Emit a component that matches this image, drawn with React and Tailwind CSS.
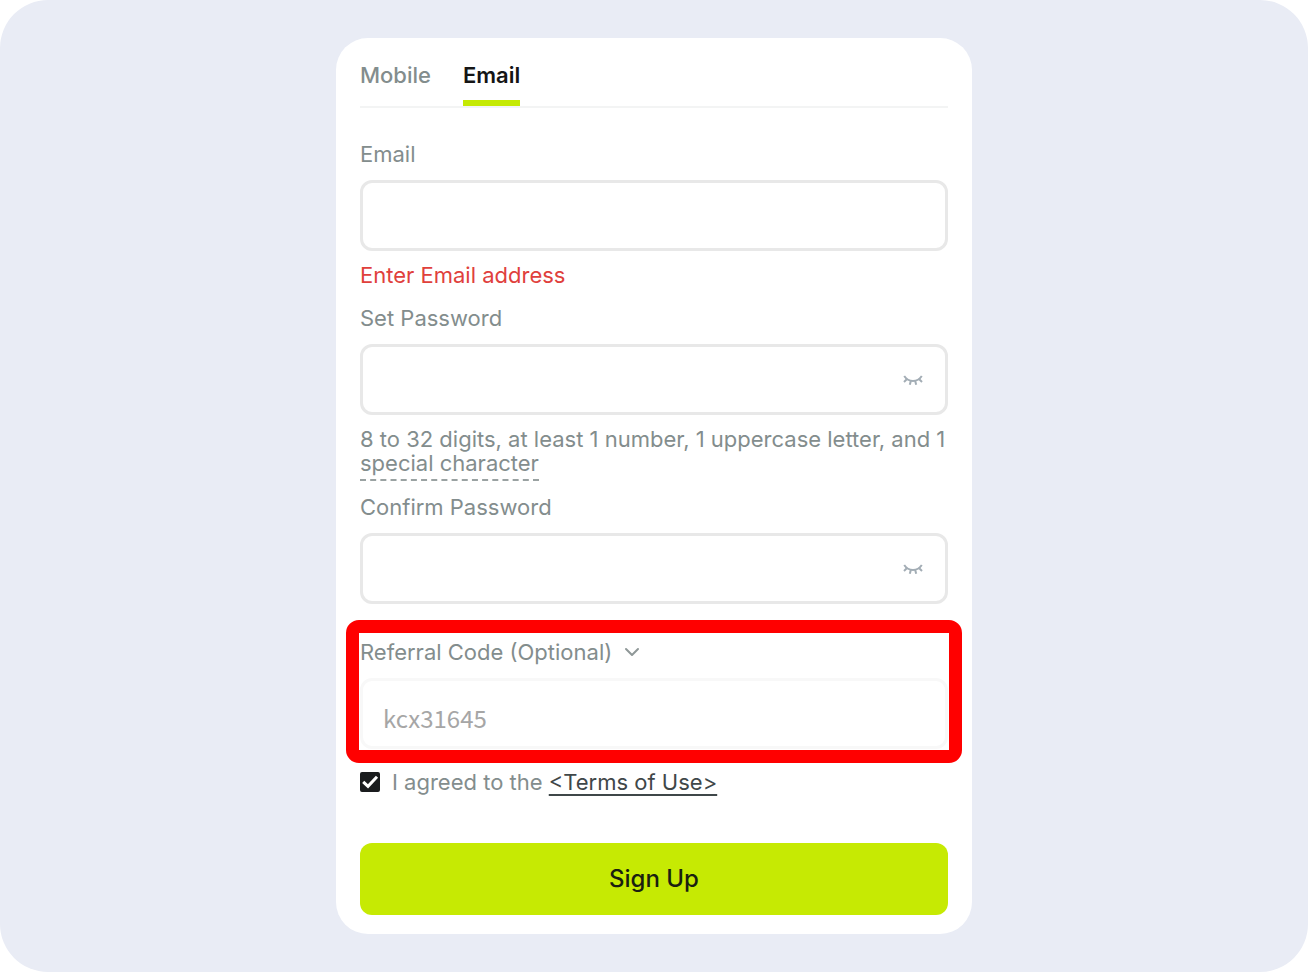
import { useState } from "react";
import { ChevronDown } from "lucide-react";

const labelClass = "block text-[22px] leading-6 text-[#838d8d]";
const inputClass =
  "block w-full h-[71px] rounded-xl border-3 border-[#e8e8e8] bg-white px-5 text-2xl text-[#1a1a1a] outline-none";

function ClosedEye() {
  return (
    <svg
      className="w-5 h-5"
      viewBox="0 0 20 20"
      fill="none"
      stroke="currentColor"
      strokeWidth="2"
    >
      <path d="M1.2 6C3.6 9.6 6.6 11 10 11C13.4 11 16.4 9.6 18.8 6" />
      <path d="M4 9L1 12" />
      <path d="M16 9L19 12" />
      <path d="M7.9 10.8L6.8 14.8" />
      <path d="M12.1 10.8L13.2 14.8" />
    </svg>
  );
}

function PasswordField({ id, label }) {
  const [visible, setVisible] = useState(false);

  return (
    <div>
      <label htmlFor={id} className={labelClass}>
        {label}
      </label>
      <div className="relative mt-[14px]">
        <input
          id={id}
          type={visible ? "text" : "password"}
          className={inputClass}
        />
        <button
          type="button"
          aria-label="Toggle password visibility"
          onClick={() => setVisible(!visible)}
          className="absolute inset-y-0 right-[25px] flex items-center text-[#a3adb5]"
        >
          <ClosedEye />
        </button>
      </div>
    </div>
  );
}

export default function App() {
  const [tab, setTab] = useState("Email");
  const [agreed, setAgreed] = useState(true);
  const [showReferral, setShowReferral] = useState(true);

  return (
    <div className="min-h-screen bg-white flex font-['Inter',sans-serif]">
      <main className="flex-1 flex items-start justify-center rounded-[48px] bg-[#e9ecf5] py-[38px]">
        <form
          onSubmit={(e) => e.preventDefault()}
          className="w-full max-w-[636px] rounded-[32px] bg-white px-6 pt-5 pb-[19px]"
        >
          <div className="flex gap-8 border-b-2 border-[#f3f4f4]">
            {["Mobile", "Email"].map((name) => (
              <button
                key={name}
                type="button"
                onClick={() => setTab(name)}
                className={
                  tab === name
                    ? "h-12 pb-2 border-b-6 border-[#c5ea04] text-[22px] leading-8 font-semibold text-[#151515]"
                    : "h-12 pb-2 border-b-6 border-transparent text-[22px] leading-8 font-medium text-[#838d8d]"
                }
              >
                {name}
              </button>
            ))}
          </div>

          <div className="mt-[34px]">
            <label htmlFor="email" className={labelClass}>
              Email
            </label>
            <input id="email" type="email" className={`${inputClass} mt-[14px]`} />
            <p className="mt-3 text-[22px] leading-6 text-[#e0403c]">
              Enter Email address
            </p>
          </div>

          <div className="mt-[19px]">
            <PasswordField id="password" label="Set Password" />
            <p className="mt-3 text-[22px] leading-6 text-[#838d8d]">
              8 to 32 digits, at least 1 number, 1 uppercase letter, and 1{" "}
              <span className="inline-block border-b-2 border-dashed border-[#9aa2a2] pb-1">
                special character
              </span>
            </p>
          </div>

          <div className="mt-[14px]">
            <PasswordField id="confirm" label="Confirm Password" />
          </div>

          <div className="mt-4 -mx-[14px] rounded-[13px] border-13 border-[#ff0000] px-px pt-[7px] pb-px">
            <div className="flex items-center gap-2">
              <label htmlFor="referral" className={labelClass}>
                Referral Code (Optional)
              </label>
              <button
                type="button"
                aria-label="Toggle referral code"
                onClick={() => setShowReferral(!showReferral)}
                className="text-[#8f9898]"
              >
                <ChevronDown className="w-6 h-6" strokeWidth={2} />
              </button>
            </div>
            {showReferral && (
              <input
                id="referral"
                type="text"
                placeholder="kcx31645"
                className="mt-[14px] block w-full h-[71px] rounded-xl border-3 border-[#f8f8f8] bg-white px-5 pt-2 font-['Noto_Sans_CJK_SC',sans-serif] text-2xl placeholder:text-[#a6a6a6] outline-none"
              />
            )}
          </div>

          <div className="mt-[7px] flex items-center gap-3 text-[22px] leading-6 text-[#838d8d]">
            <span className="relative flex">
              <input
                id="agree"
                type="checkbox"
                checked={agreed}
                onChange={(e) => setAgreed(e.target.checked)}
                className="peer w-5 h-5 appearance-none rounded-xs border-2 border-[#1a1c1e] checked:bg-[#1a1c1e]"
              />
              <svg
                className="pointer-events-none absolute inset-0 hidden w-5 h-5 text-white peer-checked:block"
                viewBox="0 0 20 20"
                fill="none"
                stroke="currentColor"
                strokeWidth="3"
              >
                <path d="M3.2 9.8L8 14.4L17 4.8" />
              </svg>
            </span>
            <p>
              <label htmlFor="agree">I agreed to the </label>
              <a href="#terms" className="text-[#3f4749] underline underline-offset-4">
                &lt;Terms of Use&gt;
              </a>
            </p>
          </div>

          <button
            type="submit"
            className="mt-[49px] w-full h-[72px] rounded-xl bg-[#c6ea03] text-2xl font-medium text-[#1a1f10]"
          >
            Sign Up
          </button>
        </form>
      </main>
    </div>
  );
}
